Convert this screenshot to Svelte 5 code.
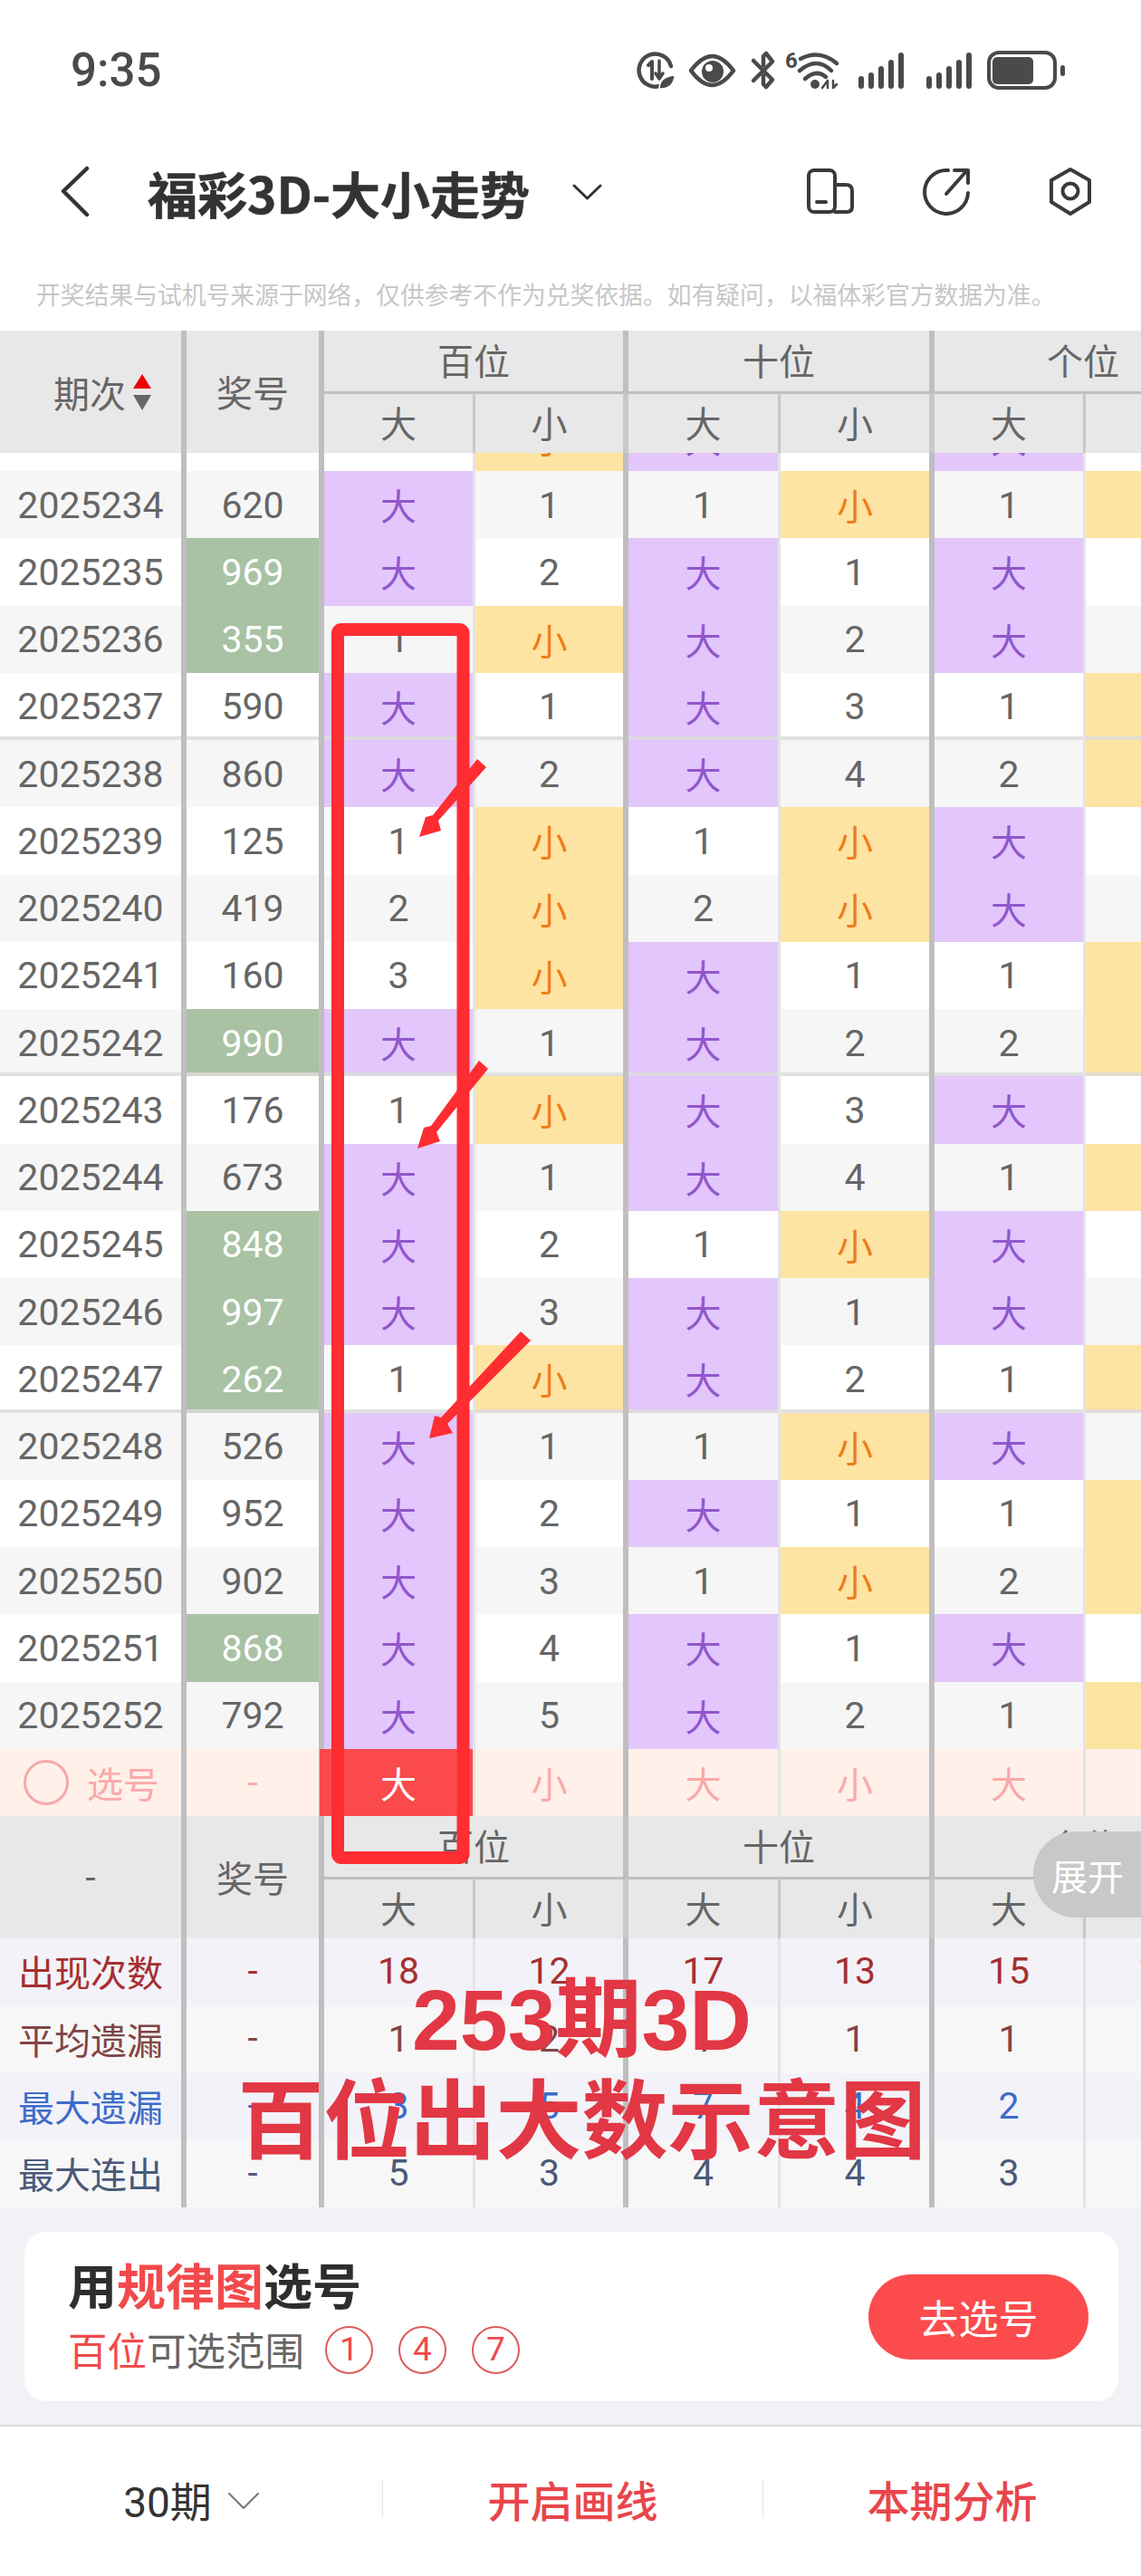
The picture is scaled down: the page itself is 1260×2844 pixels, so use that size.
<script>
  const rows = [
    ['2025233', '153', false, -4, 1, 1],
    ['2025234', '620', false, 1, -1, -1],
    ['2025235', '969', true, 2, 1, 1],
    ['2025236', '355', true, -1, 2, 2],
    ['2025237', '590', false, 1, 3, -1],
    ['2025238', '860', false, 2, 4, -2],
    ['2025239', '125', false, -1, -1, 1],
    ['2025240', '419', false, -2, -2, 2],
    ['2025241', '160', false, -3, 1, -1],
    ['2025242', '990', true, 1, 2, -2],
    ['2025243', '176', false, -1, 3, 1],
    ['2025244', '673', false, 1, 4, -1],
    ['2025245', '848', true, 2, -1, 1],
    ['2025246', '997', true, 3, 1, 2],
    ['2025247', '262', true, -1, 2, -1],
    ['2025248', '526', false, 1, -1, 1],
    ['2025249', '952', false, 2, 1, -1],
    ['2025250', '902', false, 3, -1, -2],
    ['2025251', '868', true, 4, 1, 1],
    ['2025252', '792', false, 5, 2, -1]
  ];
  const sepDates = ['2025237', '2025242', '2025247'];
  const pair = (v) =>
    v > 0
      ? [{ t: '大', c: 'big' }, { t: v, c: 'num' }]
      : [{ t: -v, c: 'num' }, { t: '小', c: 'small' }];
  const cellsOf = (r) => [...pair(r[3]), ...pair(r[4]), ...pair(r[5])];
  const bs = ['大', '小', '大', '小', '大', '小'];
  const stats = [
    { label: '出现次数', cls: 's1', v: [18, 12, 17, 13, 15, 15] },
    { label: '平均遗漏', cls: 's2', v: [1, 2, 1, 1, 1, 1] },
    { label: '最大遗漏', cls: 's3', v: [3, 5, 7, 4, 2, 5] },
    { label: '最大连出', cls: 's4', v: [5, 3, 4, 4, 3, 3] }
  ];
</script>

<div class="page">
  <div class="status">
    <span class="time">9:35</span>
    <svg class="sicons" width="480" height="56" viewBox="700 50 480 56" fill="none" stroke="#4a4a4a" stroke-linecap="round" stroke-linejoin="round">
      <path d="M731 94 A18 18 0 1 1 741 73" stroke-width="4.5" />
      <path d="M716 72 L720 68 L720 87" stroke-width="4" />
      <path d="M728 67 L728 87 M724 81 L728 87 L732 81" stroke-width="3.5" />
      <path d="M728 98 C728 89 734 84 745 83 C745 93 738 98 730 98 Z" fill="#4a4a4a" stroke="#fff" stroke-width="1.5" />
      <path d="M763 78 C772 66 780 62 786.5 62 C793 62 801 66 810 78 C801 90 793 94 786.5 94 C780 94 772 90 763 78 Z" stroke-width="4.5" />
      <circle cx="787" cy="79" r="12" fill="#4a4a4a" stroke="none" />
      <circle cx="783" cy="75" r="4" fill="#fff" stroke="none" />
      <path d="M832 67 L853 88 L846 96 L843 93 L843 84 M832 89 L853 68 L846 59 L843 62 L843 72" stroke-width="4.5" />
      <text class="six" x="867" y="75" fill="#4a4a4a" stroke="none">6</text>
      <path d="M884 65 Q905 54 924 70 M883 78 Q902 62 918 78 M889 87 Q902 76 912 85" stroke-width="4.5" />
      <circle cx="900" cy="93" r="5" fill="#4a4a4a" stroke="none" />
      <path d="M908 97 L914 89 L914 97 M920 89 L920 97 L924 93" stroke-width="2.5" />
      <g stroke-width="6">
        <path d="M951 87 V95 M962 83 V95 M973 76 V95 M984 69 V95 M995 61 V95" />
        <path d="M1026 87 V95 M1037 83 V95 M1048 76 V95 M1059 69 V95 M1070 61 V95" />
      </g>
      <rect x="1092" y="58" width="73" height="39" rx="11" stroke-width="4" />
      <rect x="1096" y="63" width="45" height="30" rx="5" fill="#4a4a4a" stroke="none" />
      <rect x="1171" y="72" width="5" height="12" rx="2.5" fill="#4a4a4a" stroke="none" />
    </svg>
  </div>

  <div class="nav">
    <svg class="back" width="32" height="58" viewBox="0 0 32 58" fill="none" stroke="#333" stroke-width="4.5" stroke-linecap="round" stroke-linejoin="round">
      <path d="M29 3 L3 28 L29 54" />
    </svg>
    <span class="title">福彩3D-大小走势</span>
    <svg class="drop" width="33" height="18" viewBox="0 0 33 18" fill="none" stroke="#333" stroke-width="3" stroke-linecap="round" stroke-linejoin="round">
      <path d="M2 2 L16.500 16 L31 2" />
    </svg>
    <svg class="actions" width="322" height="58" viewBox="888 184 322 58" fill="none" stroke="#3a3a3a" stroke-width="4" stroke-linecap="round" stroke-linejoin="round">
      <rect x="893" y="189" width="29" height="46" rx="6" />
      <path d="M922 205 H934 Q941 205 941 212 V229 Q941 235 935 235 H922" />
      <path d="M902 224 H912" />
      <path d="M1047 189 A24 24 0 1 0 1069 214" />
      <path d="M1045 215 L1068 189 M1054 189 H1069 V203" />
      <path d="M1182 188 L1203 200 V224 L1182 237 L1161 224 V200 Z" />
      <circle cx="1182" cy="212" r="8.500" />
    </svg>
  </div>

  <div class="notice">开奖结果与试机号来源于网络，仅供参考不作为兑奖依据。如有疑问，以福体彩官方数据为准。</div>

  <div class="table">
    <div class="grid head">
      <div class="cell h-span first sortable">
        <span>期次</span>
        <svg class="sort" width="20" height="40" viewBox="0 0 20 40">
          <path d="M10 0 L20 16 H0 Z" fill="#ee0000" />
          <path d="M0 23 H20 L10 40 Z" fill="#666" />
        </svg>
      </div>
      <div class="cell h-span second">奖号</div>
      <div class="cell group g1">百位</div>
      <div class="cell group g2">十位</div>
      <div class="cell group g3">个位</div>
      {#each bs as b, i}
        <div class="cell sub" class:thick={i % 2 === 1}>{b}</div>
      {/each}
    </div>

    <div class="scroller">
      <div class="scroll-inner">
        {#each rows as r}
          <div class="grid row" class:sep={sepDates.includes(r[0])} class:alt={Number(r[0]) % 2 === 0}>
            <div class="cell c1 num date">{r[0]}</div>
            <div class="cell c2 num" class:green={r[2]}>{r[1]}</div>
            {#each cellsOf(r) as c, i}
              <div class="cell {c.c}" class:thick={i % 2 === 1}>{c.t}</div>
            {/each}
          </div>
        {/each}
      </div>
    </div>

    <div class="grid row pick">
      <div class="cell c1 pick-label"><span class="ring"></span><span>选号</span></div>
      <div class="cell c2">-</div>
      {#each bs as b, i}
        <div class="cell" class:thick={i % 2 === 1} class:chosen={i === 0}>{b}</div>
      {/each}
    </div>

    <div class="grid head">
      <div class="cell h-span first dash">-</div>
      <div class="cell h-span second">奖号</div>
      <div class="cell group g1">百位</div>
      <div class="cell group g2">十位</div>
      <div class="cell group g3">个位</div>
      {#each bs as b, i}
        <div class="cell sub" class:thick={i % 2 === 1}>{b}</div>
      {/each}
    </div>

    {#each stats as s, si}
      <div class="grid row stat {s.cls}" class:tint={si % 2 === 0}>
        <div class="cell c1">{s.label}</div>
        <div class="cell c2">-</div>
        {#each s.v as v, i}
          <div class="cell num" class:thick={i % 2 === 1}>{v}</div>
        {/each}
      </div>
    {/each}
  </div>

  <div class="promo">
    <div class="card">
      <div class="card-text">
        <div class="card-title">用<em>规律图</em>选号</div>
        <div class="card-sub">
          <span><em>百位</em>可选范围</span>
          <div class="balls">
            <span class="ball">1</span>
            <span class="ball">4</span>
            <span class="ball">7</span>
          </div>
        </div>
      </div>
      <button class="go">去选号</button>
    </div>
  </div>

  <div class="footer">
    <div class="foot-item period">
      <span>30期</span>
      <svg class="foot-chev" width="34" height="20" viewBox="0 0 34 20" fill="none" stroke="#777" stroke-width="2" stroke-linecap="round" stroke-linejoin="round">
        <path d="M1 2 L17 18 L33 2" />
      </svg>
    </div>
    <div class="foot-item action">开启画线</div>
    <div class="foot-item action">本期分析</div>
  </div>

  <div class="expand">展开</div>

  <svg class="marks" width="1260" height="2844" viewBox="0 0 1260 2844" fill="none">
    <rect x="373" y="695" width="138.500" height="1356" rx="4" stroke="#fe2d32" stroke-width="14" />
    <g fill="#fe2d32">
      <path d="M527 838 L537 847 L484 906 L487 917 L463 924 L470 902 L478 900 Z" />
      <path d="M529 1171 L539 1180 L482 1250 L486 1260 L461 1268 L468 1245 L476 1243 Z" />
      <path d="M575 1470 L586 1480 L494 1572 L500 1582 L474 1588 L480 1563 L487 1565 Z" />
    </g>
  </svg>

  <div class="caption">
    <div>253期3D</div>
    <div>百位出大数示意图</div>
  </div>
</div>

<style>
  :global(body) {
    margin: 0;
    background: #fff;
  }
  .page {
    position: relative;
    width: 1260px;
    height: 2844px;
    overflow: hidden;
    background: #fff;
    font-family: Roboto, "Noto Sans CJK SC", sans-serif;
    color: #666;
  }
  .status {
    height: 155px;
    box-sizing: border-box;
    padding: 0 80px 0 78px;
    display: flex;
    align-items: center;
    justify-content: space-between;
  }
  .time {
    font-size: 51px;
    font-weight: 500;
    color: #4a4a4a;
  }
  .six {
    font-size: 24px;
    font-weight: 700;
    font-family: Roboto, sans-serif;
  }
  .nav {
    height: 114px;
    box-sizing: border-box;
    padding: 0 50px 0 67px;
    display: flex;
    align-items: center;
  }
  .title {
    margin-left: 64px;
    font-size: 55px;
    font-weight: 700;
    color: #333;
    font-family: "Noto Sans CJK SC", sans-serif;
    white-space: nowrap;
    -webkit-text-stroke: 0.6px #333;
  }
  .drop {
    margin-left: 47px;
  }
  .actions {
    margin-left: auto;
  }
  .notice {
    height: 96px;
    box-sizing: border-box;
    padding: 36px 0 0 40px;
    font-size: 26.800px;
    line-height: 40px;
    color: #c7c7c7;
    font-family: "Noto Sans CJK SC", sans-serif;
    white-space: nowrap;
  }
  .table {
    width: 1260px;
    overflow: hidden;
  }
  .grid {
    display: grid;
    grid-template-columns: 206px 152px 167px 169px 168px 170px 167px 167px;
    width: 1366px;
  }
  .cell {
    box-sizing: border-box;
    display: flex;
    align-items: center;
    justify-content: center;
    font-size: 40px;
    border-right: 3px solid #e4e4e4;
    min-width: 0;
  }
  .num {
    font-size: 41px;
  }
  .thick {
    border-right: 6px solid #bfbfbf;
  }
  .c1,
  .c2 {
    border-right: 6px solid #bfbfbf;
  }

  .head {
    height: 135px;
    background: #e8e8e8;
    grid-template-rows: 70px 65px;
  }
  .h-span {
    grid-row: 1 / span 2;
    border-right: 6px solid #bfbfbf;
  }
  .first {
    grid-column: 1;
    gap: 8px;
  }
  .sortable {
    padding-left: 26px;
  }
  .dash {
    font-size: 41px;
  }
  .second {
    grid-column: 2;
    padding-bottom: 2px;
  }
  .group {
    border-right: 6px solid #bfbfbf;
    border-bottom: 3px solid #bfbfbf;
    padding-bottom: 4px;
  }
  .g1 {
    grid-column: 3 / span 2;
    grid-row: 1;
  }
  .g2 {
    grid-column: 5 / span 2;
    grid-row: 1;
  }
  .g3 {
    grid-column: 7 / span 2;
    grid-row: 1;
  }
  .sub {
    border-right-color: #c8c8c8;
    padding-bottom: 3px;
  }
  .sub:not(.thick) {
    border-right: 3px solid #c8c8c8;
  }

  .scroller {
    height: 1431px;
    overflow: hidden;
  }
  .scroll-inner {
    margin-top: -54.250px;
  }
  .row {
    height: 74.250px;
    background: #fff;
  }
  .row.alt {
    background: #f6f6f6;
  }
  .scroll-inner .num {
    padding-top: 1px;
  }
  .sep .cell {
    box-shadow: inset 0 -4px 0 rgba(220, 220, 220, 0.85);
  }
  .green {
    background: #a9c2a4;
    color: #fff;
    border-right-color: #bfbfbf;
  }
  .big {
    background: #e2c6fc;
    color: #9057cc;
  }
  .small {
    background: #fee4a2;
    color: #ee7d1a;
  }

  .pick {
    background: #fff0ea;
    color: #f9a9a9;
  }
  .pick-label {
    justify-content: flex-start;
    padding-left: 26px;
    gap: 20px;
  }
  .ring {
    width: 50px;
    height: 50px;
    box-sizing: border-box;
    border: 3px solid #f7a8a8;
    border-radius: 50%;
    flex: none;
  }
  .chosen {
    position: relative;
    background: #fa4a4c;
    color: #fff;
    box-shadow: -5px 0 0 #fa4a4c;
  }

  .stat {
    background: #f7f7f7;
  }
  .stat .cell {
    padding-bottom: 2px;
  }
  .stat.tint {
    background: #f2f2f8;
  }
  .s1 {
    color: #a62f30;
  }
  .s2 {
    color: #804545;
  }
  .s3 {
    color: #3e6cc9;
  }
  .s4 {
    color: #4a5a78;
  }

  .promo {
    height: 240px;
    box-sizing: border-box;
    padding: 27px 25px 0 27px;
    background: #f1f2f6;
  }
  .card {
    height: 187px;
    box-sizing: border-box;
    background: #fff;
    border-radius: 24px;
    padding: 0 33px 0 48px;
    display: flex;
    align-items: center;
    justify-content: space-between;
    font-family: "Noto Sans CJK SC", sans-serif;
  }
  .card em {
    font-style: normal;
    color: #f24a4c;
  }
  .card-text {
    padding-bottom: 8px;
  }
  .card-title {
    font-size: 54px;
    line-height: 72px;
    font-weight: 700;
    color: #2e2e2e;
  }
  .card-sub {
    display: flex;
    align-items: center;
    gap: 23px;
    margin-top: 9px;
    font-size: 43.500px;
    line-height: 54px;
    color: #666;
  }
  .balls {
    display: flex;
    gap: 28px;
  }
  .ball {
    width: 53px;
    height: 53px;
    box-sizing: border-box;
    display: flex;
    align-items: center;
    justify-content: center;
    border: 2px solid #dd5b5b;
    border-radius: 50%;
    font-family: Roboto, sans-serif;
    font-size: 37px;
    color: #f04a4a;
  }
  .go {
    width: 243px;
    height: 94px;
    border: none;
    border-radius: 47px;
    background: #fb4b4d;
    color: #fff;
    font-size: 44px;
    font-family: "Noto Sans CJK SC", sans-serif;
    padding: 0;
  }

  .footer {
    height: 167px;
    box-sizing: border-box;
    border-top: 2px solid #dcdcdc;
    padding-bottom: 6px;
    display: grid;
    grid-template-columns: 422px 420px 418px;
    align-items: center;
  }
  .foot-item {
    height: 42px;
    display: flex;
    align-items: center;
    justify-content: center;
    white-space: nowrap;
  }
  .foot-item + .foot-item {
    border-left: 1px solid #e3e3e3;
  }
  .period {
    gap: 18px;
    font-size: 46px;
    color: #333;
  }
  .foot-chev {
    margin-top: 5px;
  }
  .action {
    font-size: 47px;
    font-weight: 500;
    color: #e8464c;
    font-family: "Noto Sans CJK SC", sans-serif;
  }

  .expand {
    position: absolute;
    right: 0;
    top: 2022px;
    width: 119px;
    height: 95px;
    box-sizing: border-box;
    padding-left: 20px;
    display: flex;
    align-items: center;
    background: #c8c8c8;
    border-radius: 47px 0 0 47px;
    color: #fff;
    font-size: 40px;
  }
  .marks {
    position: absolute;
    left: 0;
    top: 0;
    pointer-events: none;
  }
  .caption {
    position: absolute;
    left: 0;
    top: 2174px;
    width: 1285px;
    text-align: center;
    font-family: "Liberation Sans", "Noto Sans CJK SC", sans-serif;
    font-size: 95px;
    font-weight: 700;
    line-height: 113px;
    color: #e23744;
  }
</style>
